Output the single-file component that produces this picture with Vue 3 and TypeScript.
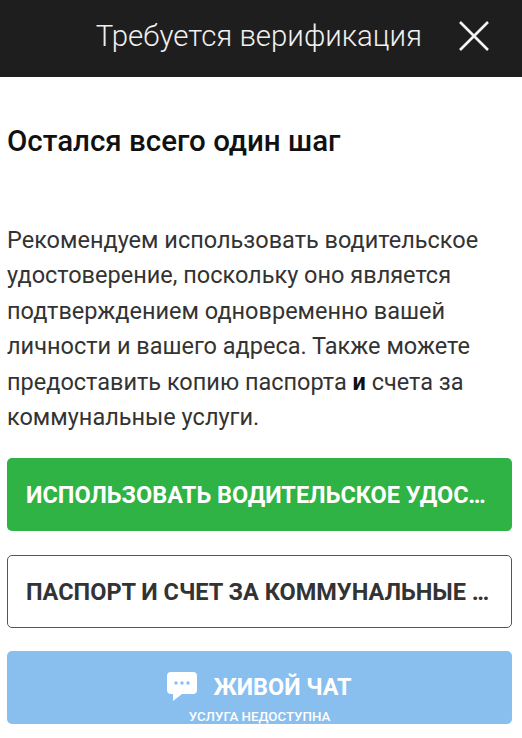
<script setup lang="ts">
const title = 'Требуется верификация'
</script>

<template>
  <div class="page">
    <header class="bar">
      <span class="bar-title">{{ title }}</span>
      <svg class="close" width="30" height="30" viewBox="0 0 30 30"><path d="M1 1 L29 29 M29 1 L1 29" stroke="#f4f4f4" stroke-width="2.6" fill="none"/></svg>
    </header>
    <main class="body">
      <h1 class="heading">Остался всего один шаг</h1>
      <p class="copy">Рекомендуем использовать водительское удостоверение, поскольку оно является подтверждением одновременно вашей личности и вашего адреса. Также можете предоставить копию паспорта <b>и</b> счета за коммунальные услуги.</p>
      <button class="btn green"><span class="label">ИСПОЛЬЗОВАТЬ ВОДИТЕЛЬСКОЕ УДОСТОВЕРЕНИЕ</span></button>
      <button class="btn outline"><span class="label">ПАСПОРТ И СЧЕТ ЗА КОММУНАЛЬНЫЕ УСЛУГИ</span></button>
      <button class="btn chat">
        <span class="chat-row">
          <svg width="30" height="30" viewBox="0 0 30 30"><path d="M4 0 H26 A4 4 0 0 1 30 4 V18 A4 4 0 0 1 26 22 H15 L6 29 V22 H4 A4 4 0 0 1 0 18 V4 A4 4 0 0 1 4 0 Z" fill="#fff"/><circle cx="9" cy="11" r="1.7" fill="#88bfef"/><circle cx="15" cy="11" r="1.7" fill="#88bfef"/><circle cx="21" cy="11" r="1.7" fill="#88bfef"/></svg>
          <span>ЖИВОЙ ЧАТ</span>
        </span>
        <span class="sub">УСЛУГА НЕДОСТУПНА</span>
      </button>
    </main>
  </div>
</template>

<style scoped>
.page { width: 522px; height: 738px; overflow: hidden; background: #fff; font-family: Roboto, sans-serif; color: #222; }
.bar { height: 77px; background: #1e1e1e; color: #f0f0f0; display: flex; align-items: center; justify-content: flex-end; gap: 37px; padding: 0 33px 5px 0; box-sizing: border-box; }
.bar-title { font-size: 29.4px; font-weight: 300; }
.close { flex: none; }
.body { padding: 0 10px 0 7px; }
.heading { margin: 47px 0 0; font-size: 29.5px; line-height: 34px; font-weight: 500; color: #111; }
.copy { margin: 65px 0 0; font-size: 23.5px; line-height: 35.4px; color: #333; }
.copy b { color: #111; }
.btn { display: block; width: 100%; box-sizing: border-box; border-radius: 5px; font-family: inherit; font-weight: 700; font-size: 23.5px; padding: 0 19px; text-align: left; border: 0; }
.label { display: block; overflow: hidden; white-space: nowrap; text-overflow: ellipsis; }
.green { margin-top: 23px; height: 73px; background: #2fb344; color: #fff; }
.outline { margin-top: 24px; height: 73px; background: #fff; border: 1.5px solid #555; color: #333; padding: 0 19px 0 18px; }
.chat { margin-top: 23px; height: 73px; background: #88bfef; color: #fff; padding: 21px 0 0; text-align: center; display: flex; flex-direction: column; align-items: center; }
.chat-row { display: flex; align-items: center; justify-content: center; gap: 16px; height: 30px; font-size: 23.4px; }
.sub { display: block; font-size: 13.3px; font-weight: 500; margin-top: 8px; line-height: 14px; }
</style>
